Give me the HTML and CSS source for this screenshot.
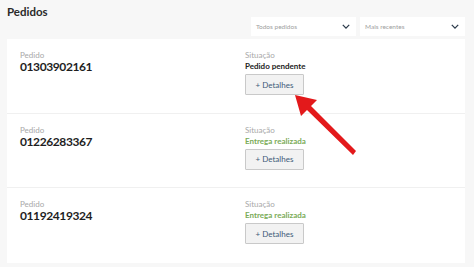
FILE: index.html
```html
<!DOCTYPE html>
<html lang="pt">
<head>
<meta charset="utf-8">
<link rel="stylesheet" href="styles.css">
</head>
<body>
<div class="page">
  <header class="top">
    <h1 class="title">Pedidos</h1>
    <div class="filters">
      <div class="select"><span>Todos pedidos</span><svg class="chev" viewBox="0 0 10 6"><path d="M1 1l4 4 4-4" fill="none" stroke="#2b3a4a" stroke-width="1.6"/></svg></div>
      <div class="select"><span>Mais recentes</span><svg class="chev" viewBox="0 0 10 6"><path d="M1 1l4 4 4-4" fill="none" stroke="#2b3a4a" stroke-width="1.6"/></svg></div>
    </div>
  </header>
  <section class="card">
    <div class="row">
      <div class="col-id"><div class="label">Pedido</div><div class="num">01303902161</div></div>
      <div class="col-st"><div class="label">Situação</div><div class="status pending">Pedido pendente</div><button class="btn">+ Detalhes</button></div>
    </div>
    <div class="row">
      <div class="col-id"><div class="label">Pedido</div><div class="num">01226283367</div></div>
      <div class="col-st"><div class="label">Situação</div><div class="status done">Entrega realizada</div><button class="btn">+ Detalhes</button></div>
    </div>
    <div class="row">
      <div class="col-id"><div class="label">Pedido</div><div class="num">01192419324</div></div>
      <div class="col-st"><div class="label">Situação</div><div class="status done">Entrega realizada</div><button class="btn">+ Detalhes</button></div>
    </div>
  </section>
  <svg class="arrow" viewBox="0 0 80 80" width="80" height="80">
    <path d="M3 3 L25 8 L19 14 L64 59 L61 63 L15 18 L9 24 Z" fill="#e3191b"/>
  </svg>
</div>
</body>
</html>
```
FILE: styles.css
```css
* { box-sizing: border-box; }
html, body { margin: 0; padding: 0; }
body {
  background: #f7f7f7;
  font-family: Lato, "Open Sans", sans-serif;
  color: #222;
  width: 474px;
  height: 267px;
  overflow: hidden;
}
.page { position: relative; height: 267px; }
.top {
  display: flex;
  justify-content: space-between;
  height: 39px;
  padding: 0 9px 0 7px;
}
.title {
  margin: 5px 0 0 0;
  font-size: 11.5px;
  font-weight: 700;
  color: #2a2a2a;
}
.filters {
  display: flex;
  gap: 4px;
  align-self: flex-start;
  margin-top: 17px;
}
.select {
  width: 105px;
  height: 19px;
  background: #fff;
  display: flex;
  align-items: center;
  justify-content: space-between;
  padding: 0 6px 0 5px;
  font-size: 6.5px;
  color: #a0a0a0;
}
.chev { width: 8px; height: 5px; }
.card {
  background: #fff;
  margin: 0 9px 0 7px;
  height: 224px;
}
.row {
  display: grid;
  grid-template-columns: 225px 1fr;
  padding: 11px 0 0 13px;
  height: 74.5px;
  border-bottom: 1px solid #f0f0f0;
}
.row:last-child { border-bottom: none; }
.label {
  font-size: 8px;
  color: #a8a8a8;
  line-height: 10px;
}
.num {
  font-size: 12px;
  font-weight: 700;
  color: #1e1e1e;
  line-height: 14px;
  letter-spacing: -0.4px;
}
.status {
  font-size: 8px;
  font-weight: 700;
  line-height: 11px;
  margin-top: 1px;
}
.pending { color: #222; }
.done { color: #7aab57; }
.btn {
  display: block;
  margin-top: 2px;
  width: 59px;
  height: 21px;
  background: #f2f2f2;
  border: 1px solid #c9c9c9;
  border-radius: 1px;
  font-family: Lato, sans-serif;
  font-size: 8px;
  color: #3d5a78;
  padding: 0;
}
.arrow {
  position: absolute;
  left: 292px;
  top: 92px;
}
```
